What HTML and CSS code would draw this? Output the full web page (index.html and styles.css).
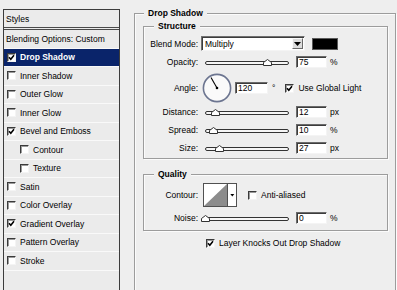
FILE: index.html
```html
<!DOCTYPE html>
<html>
<head>
<meta charset="utf-8">
<title>Layer Style</title>
<link rel="stylesheet" href="styles.css">
</head>
<body>
<div class="app">
  <div class="styles-list">
    <div class="list-head">Styles</div>
    <div class="item plain">Blending Options: Custom</div>
    <div class="item selected"><span class="cb"><svg viewBox="0 0 7 7" width="7" height="7"><polyline points="1,3.2 2.8,5.2 6,1.3" fill="none" stroke="#000" stroke-width="1.6"/></svg></span>Drop Shadow</div>
    <div class="item"><span class="cb"></span>Inner Shadow</div>
    <div class="item"><span class="cb"></span>Outer Glow</div>
    <div class="item"><span class="cb"></span>Inner Glow</div>
    <div class="item"><span class="cb"><svg viewBox="0 0 7 7" width="7" height="7"><polyline points="1,3.2 2.8,5.2 6,1.3" fill="none" stroke="#000" stroke-width="1.6"/></svg></span>Bevel and Emboss</div>
    <div class="item sub"><span class="cb"></span>Contour</div>
    <div class="item sub"><span class="cb"></span>Texture</div>
    <div class="item"><span class="cb"></span>Satin</div>
    <div class="item"><span class="cb"></span>Color Overlay</div>
    <div class="item"><span class="cb"><svg viewBox="0 0 7 7" width="7" height="7"><polyline points="1,3.2 2.8,5.2 6,1.3" fill="none" stroke="#000" stroke-width="1.6"/></svg></span>Gradient Overlay</div>
    <div class="item"><span class="cb"></span>Pattern Overlay</div>
    <div class="item"><span class="cb"></span>Stroke</div>
  </div>

  <fieldset class="group outer">
    <legend>Drop Shadow</legend>

    <fieldset class="group inner structure">
      <legend>Structure</legend>

      <div class="row row-blend">
        <span class="lbl">Blend Mode:</span>
        <div class="select">
          <span class="select-value">Multiply</span>
          <span class="select-btn"><svg width="7" height="4" viewBox="0 0 7 4"><polygon points="0,0 7,0 3.5,4" fill="#000"/></svg></span>
        </div>
        <span class="swatch"></span>
      </div>

      <div class="row">
        <span class="lbl">Opacity:</span>
        <div class="slider"><div class="track"></div><svg class="thumb" style="--v:0.74" width="9" height="7" viewBox="0 0 9 7"><path d="M0.5 6.5V3.5L4.5 0.5L8.5 3.5V6.5Z" fill="#fff" stroke="#333"/></svg></div>
        <span class="field">75</span>
        <span class="unit">%</span>
      </div>

      <div class="row row-angle">
        <span class="lbl">Angle:</span>
        <svg class="dial" width="30" height="30" viewBox="0 0 30 30"><circle cx="15" cy="15" r="13.6" fill="#fafafa" stroke="#6c7590" stroke-width="1.6"/><line x1="15" y1="15" x2="9" y2="4.6" stroke="#000" stroke-width="1.1"/><circle cx="15" cy="15" r="1.3" fill="#000"/></svg>
        <span class="field field-wide">120</span>
        <span class="deg">°</span>
        <span class="cb cb-gl"><svg viewBox="0 0 7 7" width="7" height="7"><polyline points="1,3.2 2.8,5.2 6,1.3" fill="none" stroke="#000" stroke-width="1.6"/></svg></span>
        <span class="cb-text">Use Global Light</span>
      </div>

      <div class="row row-dist">
        <span class="lbl">Distance:</span>
        <div class="slider"><div class="track"></div><svg class="thumb" style="--v:0.13" width="9" height="7" viewBox="0 0 9 7"><path d="M0.5 6.5V3.5L4.5 0.5L8.5 3.5V6.5Z" fill="#fff" stroke="#333"/></svg></div>
        <span class="field">12</span>
        <span class="unit">px</span>
      </div>

      <div class="row row-next">
        <span class="lbl">Spread:</span>
        <div class="slider"><div class="track"></div><svg class="thumb" style="--v:0.10" width="9" height="7" viewBox="0 0 9 7"><path d="M0.5 6.5V3.5L4.5 0.5L8.5 3.5V6.5Z" fill="#fff" stroke="#333"/></svg></div>
        <span class="field">10</span>
        <span class="unit">%</span>
      </div>

      <div class="row row-next">
        <span class="lbl">Size:</span>
        <div class="slider"><div class="track"></div><svg class="thumb" style="--v:0.17" width="9" height="7" viewBox="0 0 9 7"><path d="M0.5 6.5V3.5L4.5 0.5L8.5 3.5V6.5Z" fill="#fff" stroke="#333"/></svg></div>
        <span class="field">27</span>
        <span class="unit">px</span>
      </div>
    </fieldset>

    <fieldset class="group inner quality">
      <legend>Quality</legend>

      <div class="row row-contour">
        <span class="lbl">Contour:</span>
        <svg class="contour" width="34" height="24" viewBox="0 0 34 24"><rect x="0.5" y="0.5" width="33" height="23" fill="#fff" stroke="#505050"/><polygon points="1,23 24,1 24,23" fill="#8c8c8c"/><line x1="24.5" y1="0" x2="24.5" y2="24" stroke="#505050"/><polygon points="27.3,11 31.3,11 29.3,13.6" fill="#000"/></svg>
        <span class="cb cb-aa"></span>
        <span class="cb-text">Anti-aliased</span>
      </div>

      <div class="row">
        <span class="lbl">Noise:</span>
        <div class="slider"><div class="track"></div><svg class="thumb" style="--v:0" width="9" height="7" viewBox="0 0 9 7"><path d="M0.5 6.5V3.5L4.5 0.5L8.5 3.5V6.5Z" fill="#fff" stroke="#333"/></svg></div>
        <span class="field">0</span>
        <span class="unit">%</span>
      </div>
    </fieldset>

    <div class="knock">
      <span class="cb"><svg viewBox="0 0 7 7" width="7" height="7"><polyline points="1,3.2 2.8,5.2 6,1.3" fill="none" stroke="#000" stroke-width="1.6"/></svg></span>
      <span class="cb-text">Layer Knocks Out Drop Shadow</span>
    </div>
  </fieldset>
</div>
</body>
</html>
```

FILE: styles.css
```css
* {
  box-sizing: border-box;
}

html,
body {
  margin: 0;
  height: 100%;
  overflow: hidden;
}

body {
  background: #eeeeee;
  font-family: "Liberation Sans", Arial, sans-serif;
  font-size: 8.5px;
  color: #000;
}

.app {
  display: flex;
  align-items: flex-start;
  padding-left: 3px;
}

/* ---------- left styles list ---------- */
.styles-list {
  flex: none;
  margin-top: 9px;
  width: 117px;
  height: 300px;
  border: 1px solid #3c3c3c;
  background: #ebebeb;
}

.list-head {
  height: 20px;
  padding-left: 2px;
  display: flex;
  align-items: center;
  border-bottom: 3px double #4a4a4a;
}

.item {
  height: 18.5px;
  display: flex;
  align-items: center;
  gap: 4px;
  padding-left: 3px;
  border-bottom: 1px solid #f9f9f9;
}

.item.plain {
  padding-left: 2px;
}

.item.sub {
  padding-left: 16px;
}

.item.selected {
  background: #0a246a;
  color: #fff;
  font-weight: bold;
}

/* ---------- checkboxes ---------- */
.cb {
  flex: none;
  width: 9px;
  height: 9px;
  display: inline-flex;
  align-items: center;
  justify-content: center;
  background: #fff;
  border: 1px solid;
  border-color: #3a3a3a #f4f4f4 #f4f4f4 #3a3a3a;
  box-shadow: inset 1px 1px 0 #9a9a9a;
}

.cb svg {
  display: block;
}

.cb-text {
  margin-left: 4px;
  white-space: nowrap;
}

/* ---------- group boxes ---------- */
.group {
  margin: 0;
  padding: 0;
  min-width: 0;
  border: 1px solid #9c9c9c;
  box-shadow: inset 1px 1px 0 #fbfbfb, 1px 1px 0 #fbfbfb;
}

.group > legend {
  padding: 0 4px;
  font-weight: bold;
  line-height: 12px;
  background: #eeeeee;
}

.outer {
  flex: none;
  margin-left: 14px;
  margin-top: 7px;
  width: 262px;
  height: 300px;
  padding: 1px 7px 0 8px;
}

.outer > legend {
  margin-left: 1px;
}

.inner > legend {
  margin-left: 10px;
}

.structure {
  padding-bottom: 4px;
}

.quality {
  margin-top: 9px;
  padding-bottom: 6px;
}

/* ---------- rows ---------- */
.row {
  display: flex;
  align-items: center;
  height: 12px;
  margin-top: 5px;
}

.lbl {
  flex: none;
  width: 54px;
  text-align: right;
  white-space: nowrap;
}

.row-blend {
  height: 15px;
  margin-top: 4px;
}

.row-angle {
  height: 30px;
}

.row-dist {
  margin-top: 3px;
}

.row-next {
  margin-top: 6px;
}

.row-contour {
  height: 24px;
  margin-top: 3px;
}

/* select */
.select {
  flex: none;
  margin-left: 3px;
  width: 104px;
  height: 15px;
  display: flex;
  background: #fff;
  border: 1px solid;
  border-color: #707070 #f4f4f4 #f4f4f4 #707070;
  box-shadow: inset 1px 1px 0 #3c3c3c;
}

.select-value {
  flex: 1;
  padding-left: 3px;
  padding-top: 1px;
  display: flex;
  align-items: center;
}

.select-btn {
  flex: none;
  width: 11px;
  margin: 1px 1px 1px 0;
  display: flex;
  align-items: center;
  justify-content: center;
  background: #dcdcdc;
  border: 1px solid;
  border-color: #fafafa #6a6a6a #6a6a6a #fafafa;
}

.select-btn svg {
  display: block;
}

.swatch {
  flex: none;
  margin-left: 7px;
  width: 26px;
  height: 12px;
  background: #000;
  border: 1px solid #5a5a5a;
}

/* slider */
.slider {
  flex: none;
  position: relative;
  margin-left: 3px;
  width: 92px;
  height: 12px;
}

.track {
  margin: 5px 4px 0;
  height: 4px;
  background: #f6f6f6;
  border: 1px solid #333;
  border-radius: 2px;
}

.thumb {
  position: absolute;
  top: 3px;
  left: calc(var(--v) * 84px - 0.5px);
  display: block;
}

/* text fields */
.field {
  flex: none;
  margin-left: 3px;
  width: 31px;
  height: 12px;
  padding-left: 2px;
  display: flex;
  align-items: center;
  background: #fff;
  border: 1px solid;
  border-color: #6a6a6a #f4f4f4 #f4f4f4 #6a6a6a;
  box-shadow: inset 1px 1px 0 #3c3c3c;
}

.field-wide {
  width: 33px;
}

.unit {
  margin-left: 3px;
}

.dial {
  flex: none;
  margin-left: 4px;
  display: block;
}

.deg {
  margin-left: 4px;
}

.cb-gl {
  margin-left: 10px;
}

.contour {
  flex: none;
  margin-left: 5px;
  display: block;
}

.cb-aa {
  margin-left: 11px;
}

.knock {
  display: flex;
  align-items: center;
  height: 12px;
  margin-top: 6px;
  margin-left: 63px;
}
```
